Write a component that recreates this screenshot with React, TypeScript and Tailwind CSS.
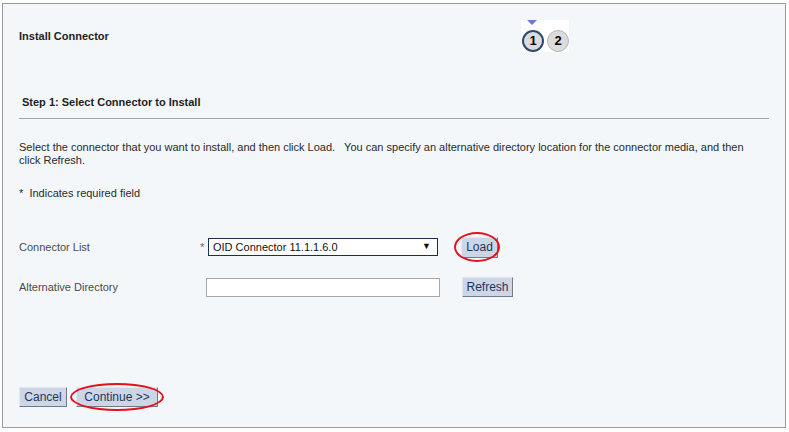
const font = { fontFamily: '"Liberation Sans", Arial, sans-serif' };

const Btn = ({ label, className = "" }: { label: string; className?: string }) => (
  <button
    className={`h-[20px] px-[3px] bg-[#cdd6e6] text-[#1d3657] text-[12px] leading-none border border-t-[#e4e9f1] border-l-[#e4e9f1] border-r-[#6f7b8c] border-b-[#6f7b8c] ${className}`}
  >
    {label}
  </button>
);

const RedRing = ({ className }: { className: string }) => (
  <span
    className={`absolute rounded-[50%] border-2 border-[#e3121b] pointer-events-none ${className}`}
  />
);

const StepTrain = () => (
  <div className="relative w-[48px] h-[32px] bg-white">
    <span className="absolute left-[6px] top-0 w-0 h-0 border-l-[5px] border-r-[5px] border-t-[5px] border-l-transparent border-r-transparent border-t-[#7277df]" />
    <div className="absolute left-[1px] top-[10px] flex gap-[3px]">
      <div className="w-[22px] h-[22px] rounded-full border-[2px] border-[#2b4a73] bg-[#dcdcdc] flex items-center justify-center text-[13px] font-bold text-black">
        1
      </div>
      <div className="w-[22px] h-[22px] rounded-full border border-[#b5b5b5] bg-[#dcdcdc] flex items-center justify-center text-[13px] font-bold text-black">
        2
      </div>
    </div>
  </div>
);

export default function App() {
  return (
    <div className="w-[789px] h-[432px] bg-white pt-[3px] pl-[2px]" style={font}>
      <div className="relative w-[784px] h-[425px] border border-[#9b9b9b] bg-[#f3f7fa] px-[16px] text-[11px] text-[#2a2a2a]">
        {/* header */}
        <div className="flex items-center mt-[16px] h-[32px]">
          <h1 className="w-[502px] font-bold text-[11px] text-[#1e1e1e]">Install Connector</h1>
          <StepTrain />
        </div>

        {/* step heading */}
        <div className="mt-[42px] pl-[3px] pb-[8px] border-b border-[#a3a3a3]">
          <h2 className="font-bold text-[11px] leading-[16px] text-[#1e1e1e]">
            Step 1: Select Connector to Install
          </h2>
        </div>

        <p className="mt-[22px] leading-[13px] whitespace-nowrap">
          Select the connector that you want to install, and then click Load.&nbsp;&nbsp; You can specify an
          alternative directory location for the connector media, and then
          <br />
          click Refresh.
        </p>

        <p className="mt-[20px] leading-[13px]">*&nbsp; Indicates required field</p>

        {/* form */}
        <div className="mt-[37px] flex items-center h-[20px]">
          <span className="w-[181px] text-[#4b4b4b]">Connector List</span>
          <span className="w-[8px] text-[#6a6a6a]">*</span>
          <div className="w-[230px] h-[18px] border border-[#1c2f52] bg-white flex items-center justify-between pl-[4px] pr-[6px] text-[#111]">
            <span>OID Connector 11.1.1.6.0</span>
            <span className="text-[9px]">▼</span>
          </div>
          <div className="relative ml-[23px]">
            <Btn label="Load" className="h-[21px] w-[37px]" />
            <RedRing className="-left-[7px] -top-[5px] w-[46px] h-[30px]" />
          </div>
        </div>

        <div className="mt-[20px] flex items-center h-[20px]">
          <span className="w-[187px] text-[#4b4b4b]">Alternative Directory</span>
          <div className="w-[234px] h-[19px] border border-[#a8a8a8] bg-white" />
          <Btn label="Refresh" className="ml-[22px] w-[51px]" />
        </div>

        {/* footer buttons */}
        <div className="absolute left-[16px] top-[383px] flex items-center">
          <Btn label="Cancel" className="w-[48px]" />
          <div className="relative ml-[9px]">
            <Btn label="Continue >>" className="w-[82px]" />
            <RedRing className="-left-[6px] -top-[4px] w-[94px] h-[28px]" />
          </div>
        </div>
      </div>
    </div>
  );
}
